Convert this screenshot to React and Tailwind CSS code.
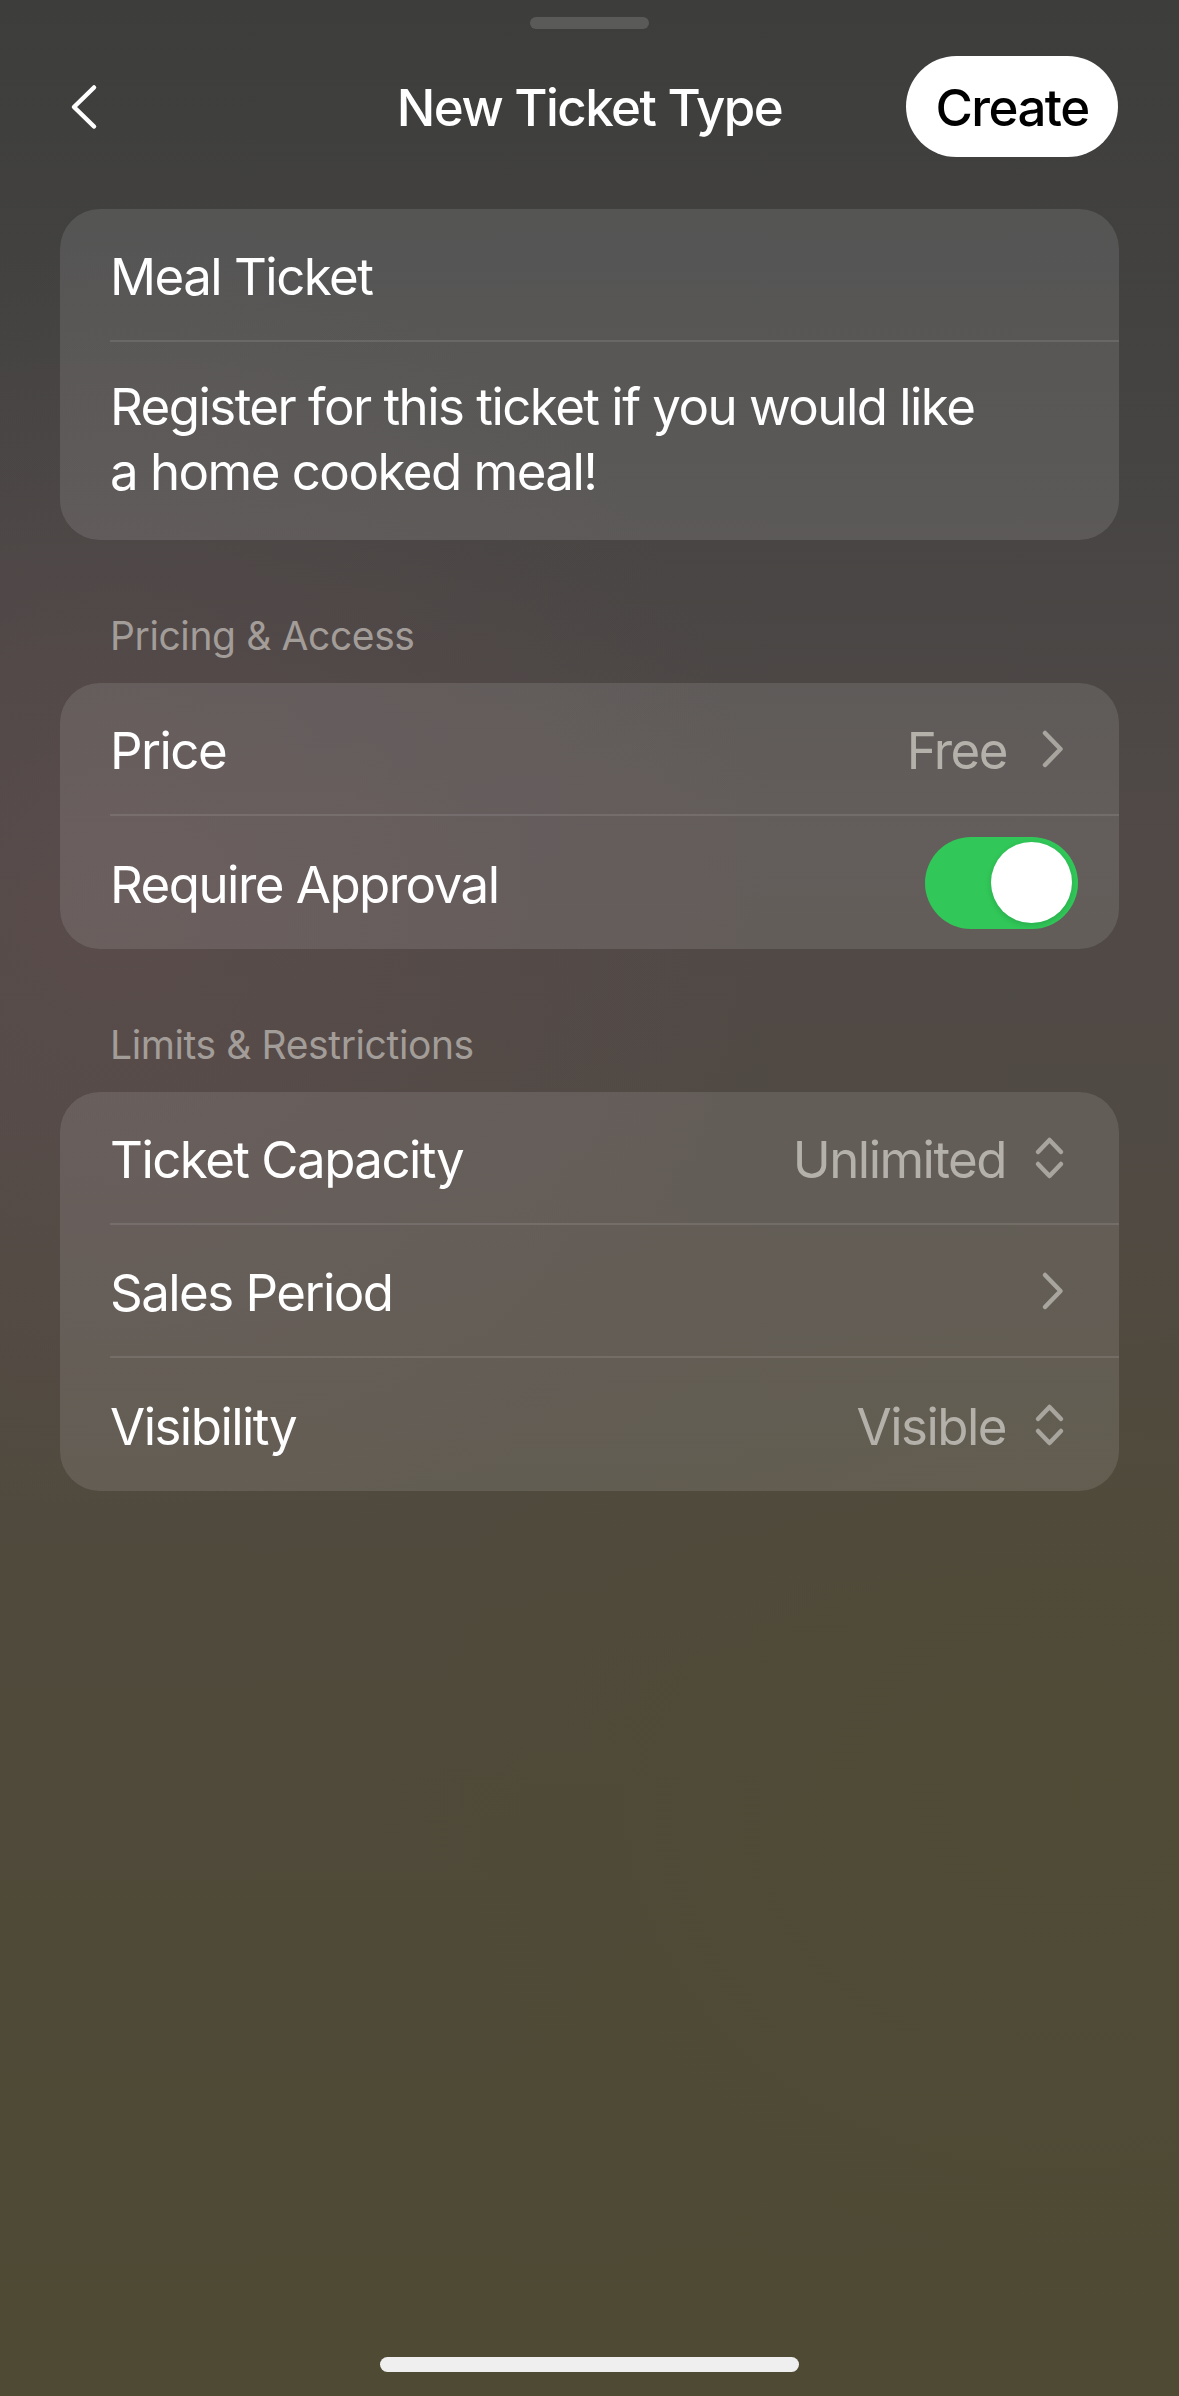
import React from "react";

// chevron pointing right, used by rows that open another screen
function ChevronRight() {
  return (
    <svg width="24" height="40" viewBox="0 0 24 40" fill="none" className="shrink-0">
      <path d="M4 4 L19.5 20 L4 36" stroke="#a8a49e" strokeWidth="4.5" strokeLinecap="round" strokeLinejoin="round" />
    </svg>
  );
}

// up/down chevron of a menu picker
function UpDown() {
  return (
    <svg width="33" height="44" viewBox="0 0 33 44" fill="none" className="shrink-0">
      <path d="M5 16 L16.5 4 L28 16" stroke="#a8a49e" strokeWidth="4.5" strokeLinecap="round" strokeLinejoin="round" />
      <path d="M5 28 L16.5 40 L28 28" stroke="#a8a49e" strokeWidth="4.5" strokeLinecap="round" strokeLinejoin="round" />
    </svg>
  );
}

function Toggle() {
  return (
    <div className="w-[153px] h-[92px] rounded-full bg-[#31c859] flex items-center justify-end pr-[6px]">
      <div className="w-[81px] h-[81px] rounded-full bg-white shadow-[0_2px_6px_rgba(0,0,0,0.15)]" />
    </div>
  );
}

function Row({ label, last, children }) {
  return (
    <div className={`ml-[50px] flex items-center h-[133px] ${last ? "" : "border-b-2 border-white/10"}`}>
      <span className="text-white pt-[5px]">{label}</span>
      <div className="ml-auto flex items-center">{children}</div>
    </div>
  );
}

function Value({ children, gap }) {
  return <span className={`text-[#b4b0aa] pt-[5px] ${gap}`}>{children}</span>;
}

function SectionTitle({ children }) {
  return (
    <div className="pl-[50px] mt-[72px] mb-[24px] text-[39px] leading-[47px] tracking-[-0.01em] text-[#a39d99]">{children}</div>
  );
}

export default function App() {
  return (
    <div className="min-h-[2396px] flex flex-col font-['Inter','Noto_Sans',sans-serif] text-[51px] tracking-[-0.03em] bg-[radial-gradient(ellipse_55%_28%_at_10%_38%,rgba(98,78,80,0.5),transparent),radial-gradient(ellipse_60%_25%_at_90%_75%,rgba(80,76,50,0.5),transparent),linear-gradient(to_bottom,#3d3d3b_0%,#454443_18%,#504947_35%,#504a43_50%,#4f4a3b_68%,#4f4a33_100%)]">
      {/* grabber */}
      <div className="pt-[17px] flex justify-center">
        <div className="w-[119px] h-[12px] rounded-full bg-[#5a5a58]" />
      </div>

      {/* nav bar */}
      <div className="mt-[27px] h-[101px] grid grid-cols-[1fr_auto_1fr] items-center">
        <button className="justify-self-start ml-[69px] w-[29px] h-[46px]">
          <svg width="29" height="46" viewBox="0 0 29 46" fill="none">
            <path d="M25 3.5 L5 23 L25 42.5" stroke="white" strokeWidth="4.5" strokeLinecap="round" strokeLinejoin="round" />
          </svg>
        </button>
        <h1 className="text-white font-medium pt-[4px]">New Ticket Type</h1>
        <button className="justify-self-end mr-[61px] w-[212px] h-[101px] rounded-full bg-white text-black font-medium pt-[4px]">
          Create
        </button>
      </div>

      <div className="px-[60px] mt-[52px]">
        {/* name + description */}
        <div className="rounded-[40px] bg-white/[0.11]">
          <Row label="Meal Ticket" />
          <div className="ml-[50px] pr-[120px] pt-[32px] pb-[36px] leading-[65px] text-white">
            Register for this ticket if you would like a home cooked meal!
          </div>
        </div>

        <SectionTitle>Pricing &amp; Access</SectionTitle>
        <div className="rounded-[40px] bg-white/[0.11]">
          <Row label="Price">
            <Value gap="mr-[34px]">Free</Value>
            <div className="mr-[54px]"><ChevronRight /></div>
          </Row>
          <Row label="Require Approval" last>
            <div className="mr-[41px]"><Toggle /></div>
          </Row>
        </div>

        <SectionTitle>Limits &amp; Restrictions</SectionTitle>
        <div className="rounded-[40px] bg-white/[0.11]">
          <Row label="Ticket Capacity">
            <Value gap="mr-[27px]">Unlimited</Value>
            <div className="mr-[53px]"><UpDown /></div>
          </Row>
          <Row label="Sales Period">
            <div className="mr-[54px]"><ChevronRight /></div>
          </Row>
          <Row label="Visibility" last>
            <Value gap="mr-[27px]">Visible</Value>
            <div className="mr-[53px]"><UpDown /></div>
          </Row>
        </div>
      </div>

      {/* home indicator */}
      <div className="mt-auto pb-[24px] flex justify-center">
        <div className="w-[419px] h-[15px] rounded-full bg-[#efefef]" />
      </div>
    </div>
  );
}
